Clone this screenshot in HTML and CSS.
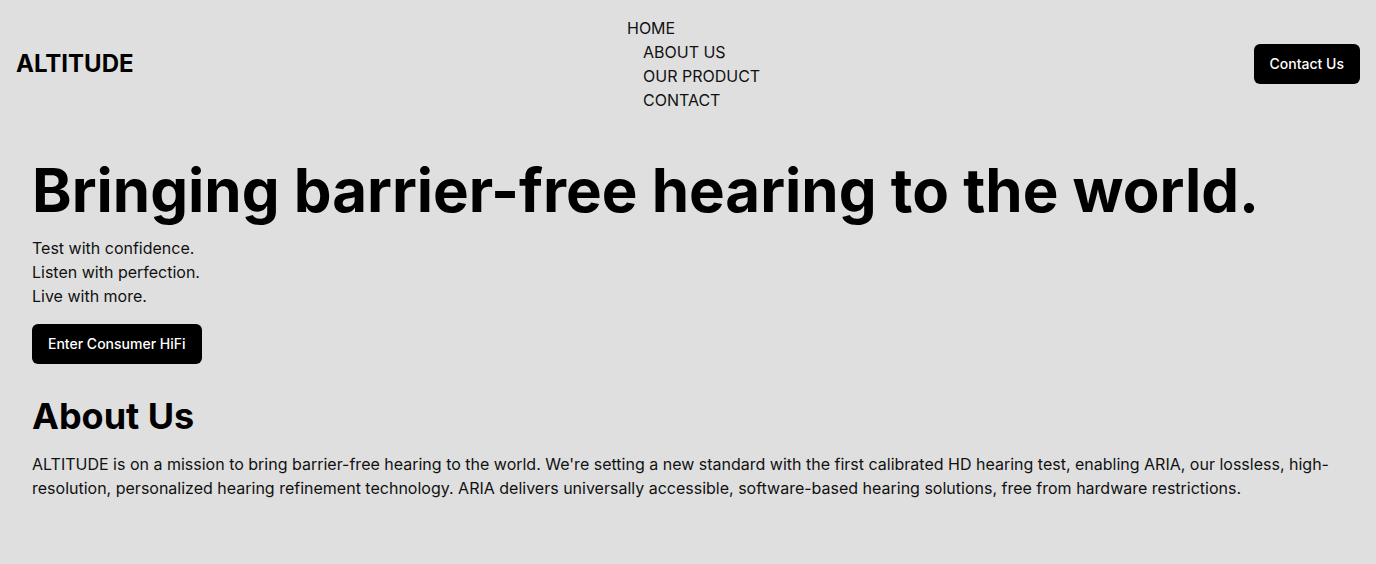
FILE: index.html
```html
<!DOCTYPE html>
<html lang="en">
<head>
<meta charset="utf-8">
<title>ALTITUDE</title>
<link rel="stylesheet" href="styles.css">
</head>
<body>
<header class="site-header">
  <div class="logo">ALTITUDE</div>
  <nav class="nav">
    <ul class="nav-list">
      <li class="nav-item nav-item-first">HOME</li>
      <li class="nav-item">ABOUT US</li>
      <li class="nav-item">OUR PRODUCT</li>
      <li class="nav-item">CONTACT</li>
    </ul>
  </nav>
  <a class="btn" href="#">Contact Us</a>
</header>
<main class="main">
  <section class="hero">
    <h1 class="hero-title">Bringing barrier-free hearing to the world.</h1>
    <p class="hero-lines">Test with confidence.<br>Listen with perfection.<br>Live with more.</p>
    <a class="btn" href="#">Enter Consumer HiFi</a>
  </section>
  <section class="about">
    <h2 class="about-title">About Us</h2>
    <p class="about-text">ALTITUDE is on a mission to bring barrier-free hearing to the world. We're setting a new standard with the first calibrated HD hearing test, enabling ARIA, our lossless, high-resolution, personalized hearing refinement technology. ARIA delivers universally accessible, software-based hearing solutions, free from hardware restrictions.</p>
  </section>
</main>
</body>
</html>
```
FILE: styles.css
```css
* { box-sizing: border-box; }
html, body {
  margin: 0;
  padding: 0;
  background: #dfdfdf;
  color: #111;
  font-family: Inter, "Liberation Sans", sans-serif;
}
.site-header {
  display: flex;
  justify-content: space-between;
  align-items: center;
  padding: 16px;
}
.logo {
  font-size: 24px;
  font-weight: 700;
  color: #000;
  line-height: 32px;
}
.nav-list {
  list-style: none;
  margin: 0;
  padding: 0;
}
.nav-item {
  font-size: 16px;
  line-height: 24px;
  margin-left: 16px;
}
.nav-item-first { margin-left: 0; }
.btn {
  display: inline-block;
  background: #000;
  color: #fff;
  text-decoration: none;
  font-size: 14px;
  font-weight: 500;
  line-height: 20px;
  padding: 10px 16px;
  border-radius: 6px;
}
.main {
  padding: 32px 32px;
}
.hero-title {
  margin: 0 0 16px;
  font-size: 60px;
  line-height: 60px;
  font-weight: 700;
  color: #000;
}
.hero-lines {
  margin: 0 0 16px;
  font-size: 16px;
  line-height: 24px;
}
.about {
  margin-top: 32px;
}
.about-title {
  margin: 0 0 16px;
  font-size: 36px;
  line-height: 40px;
  font-weight: 700;
  color: #000;
}
.about-text {
  margin: 0;
  font-size: 16px;
  line-height: 24px;
}
```
